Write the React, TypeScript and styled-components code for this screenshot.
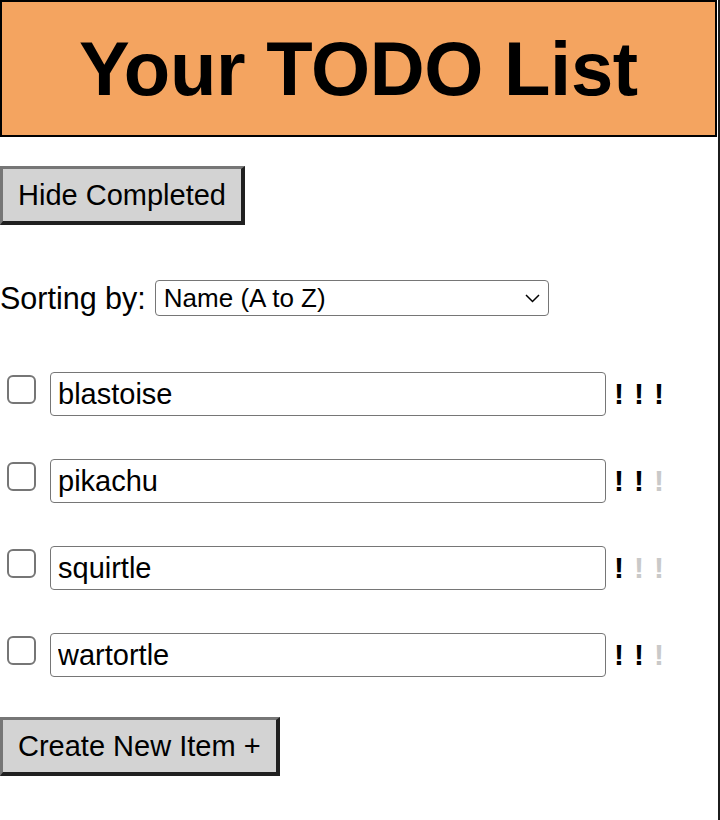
import React from "react";
import styled, { createGlobalStyle } from "styled-components";

const Global = createGlobalStyle`
  html, body { margin: 0; padding: 0; background: #fff; }
  body { font-family: "Liberation Sans", Arial, sans-serif; color: #000; }
`;

const Page = styled.div`
  box-sizing: border-box;
  width: 720px;
  min-height: 100vh;
  border-right: 2px solid #1c1c1c;
`;

const Header = styled.header`
  box-sizing: border-box;
  width: 717px;
  height: 137px;
  border: 2px solid #000;
  background: #f4a460;
  display: flex;
  align-items: center;
  justify-content: center;
`;

const Title = styled.h1`
  margin: 0;
  font-size: 76px;
  font-weight: bold;
  letter-spacing: -0.3px;
`;

const Main = styled.main`
  display: flex;
  flex-direction: column;
  align-items: flex-start;
`;

const Button = styled.button<{ $top: number }>`
  margin-top: ${(p) => p.$top}px;
  font-family: "Liberation Sans", Arial, sans-serif;
  font-size: 29px;
  line-height: 33px;
  color: #000;
  background: #d3d3d3;
  padding: 10px 15px 9px 15px;
  border-style: solid;
  border-width: 3px 4px 4px 3px;
  border-color: #767676 #202020 #202020 #767676;
  border-radius: 0;
  cursor: pointer;
`;

const SortRow = styled.div`
  margin-top: 55px;
  display: flex;
  align-items: center;
  gap: 9px;
`;

const Label = styled.label`
  font-size: 30.5px;
`;

const SelectWrap = styled.div`
  position: relative;
  display: flex;
`;

const Select = styled.select`
  box-sizing: border-box;
  appearance: none;
  width: 394px;
  height: 36px;
  font-family: "Liberation Sans", Arial, sans-serif;
  font-size: 26px;
  color: #000;
  background: #fff;
  border: 1.5px solid #767676;
  border-radius: 4px;
  padding: 0 0 0 8px;
`;

const Chevron = styled.svg`
  position: absolute;
  right: 9px;
  top: 14px;
  pointer-events: none;
`;

const List = styled.ul`
  list-style: none;
  margin: 56px 0 0 0;
  padding: 0;
  display: flex;
  flex-direction: column;
  gap: 43px;
`;

const Row = styled.li`
  display: flex;
  align-items: flex-start;
`;

const Check = styled.input.attrs({ type: "checkbox" })`
  appearance: none;
  box-sizing: border-box;
  width: 29px;
  height: 29px;
  margin: 3px 14px 0 7px;
  border: 2px solid #767676;
  border-radius: 6px;
  background: #fff;
`;

const NameInput = styled.input`
  box-sizing: border-box;
  width: 556px;
  height: 44px;
  font-family: "Liberation Sans", Arial, sans-serif;
  font-size: 29px;
  color: #000;
  padding: 0 0 0 7px;
  border: 1.5px solid #767676;
  border-radius: 4px;
  background: #fff;
`;

const Priority = styled.div`
  display: flex;
  gap: 10px;
  margin-left: 8px;
  height: 44px;
  align-items: center;
`;

const Mark = styled.span<{ $on: boolean }>`
  font-size: 30px;
  font-weight: bold;
  width: 10px;
  color: ${(p) => (p.$on ? "#000" : "#c9c9c9")};
`;

const items = [
  { name: "blastoise", priority: 3 },
  { name: "pikachu", priority: 2 },
  { name: "squirtle", priority: 1 },
  { name: "wartortle", priority: 2 },
];

export default function App() {
  return (
    <Page>
      <Global />
      <Header>
        <Title>Your TODO List</Title>
      </Header>
      <Main>
        <Button $top={29}>Hide Completed</Button>
        <SortRow>
          <Label htmlFor="sort">Sorting by:</Label>
          <SelectWrap>
            <Select id="sort" defaultValue="name-asc">
              <option value="name-asc">Name (A to Z)</option>
              <option value="name-desc">Name (Z to A)</option>
              <option value="priority">Priority</option>
            </Select>
            <Chevron width="15" height="9" viewBox="0 0 15 9">
              <path d="M1 1l6.5 6.5L14 1" fill="none" stroke="#000" strokeWidth="1.5" />
            </Chevron>
          </SelectWrap>
        </SortRow>
        <List>
          {items.map((it) => (
            <Row key={it.name}>
              <Check />
              <NameInput defaultValue={it.name} />
              <Priority>
                {[1, 2, 3].map((n) => (
                  <Mark key={n} $on={n <= it.priority}>!</Mark>
                ))}
              </Priority>
            </Row>
          ))}
        </List>
        <Button $top={40}>Create New Item +</Button>
      </Main>
    </Page>
  );
}
